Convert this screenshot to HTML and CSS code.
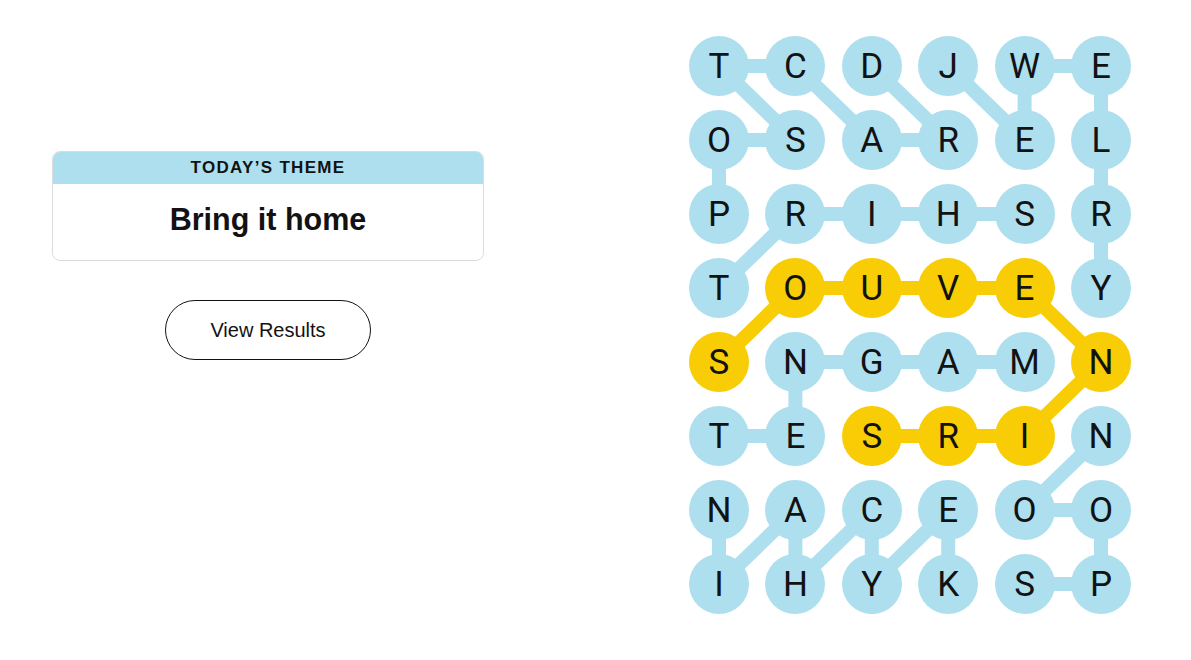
FILE: index.html
```html
<!DOCTYPE html>
<html>
<head>
<meta charset="utf-8">
<link rel="stylesheet" href="styles.css">
</head>
<body>
<div class="page">
  <div class="left">
    <div class="theme-card">
      <div class="theme-head">TODAY’S THEME</div>
      <div class="theme-body">Bring it home</div>
    </div>
    <button class="results-btn">View Results</button>
  </div>
  <div class="board">
    <svg class="links" width="442" height="578" viewBox="0 0 442 578">
      <g class="blue">
        <line x1="30" y1="30" x2="106.4" y2="30"/>
        <line x1="30" y1="30" x2="106.4" y2="104"/>
        <line x1="106.4" y1="30" x2="182.8" y2="104"/>
        <line x1="182.8" y1="30" x2="259.2" y2="104"/>
        <line x1="259.2" y1="30" x2="335.6" y2="104"/>
        <line x1="335.6" y1="30" x2="412" y2="30"/>
        <line x1="335.6" y1="30" x2="335.6" y2="104"/>
        <line x1="412" y1="30" x2="412" y2="104"/>
        <line x1="30" y1="104" x2="106.4" y2="104"/>
        <line x1="182.8" y1="104" x2="259.2" y2="104"/>
        <line x1="30" y1="104" x2="30" y2="178"/>
        <line x1="412" y1="104" x2="412" y2="178"/>
        <line x1="106.4" y1="178" x2="335.6" y2="178"/>
        <line x1="106.4" y1="178" x2="30" y2="252"/>
        <line x1="412" y1="178" x2="412" y2="252"/>
        <line x1="106.4" y1="326" x2="335.6" y2="326"/>
        <line x1="106.4" y1="326" x2="106.4" y2="400"/>
        <line x1="30" y1="400" x2="106.4" y2="400"/>
        <line x1="412" y1="400" x2="335.6" y2="474"/>
        <line x1="335.6" y1="474" x2="412" y2="474"/>
        <line x1="412" y1="474" x2="412" y2="548"/>
        <line x1="335.6" y1="548" x2="412" y2="548"/>
        <line x1="30" y1="474" x2="30" y2="548"/>
        <line x1="30" y1="548" x2="106.4" y2="474"/>
        <line x1="106.4" y1="474" x2="106.4" y2="548"/>
        <line x1="106.4" y1="548" x2="182.8" y2="474"/>
        <line x1="182.8" y1="474" x2="182.8" y2="548"/>
        <line x1="182.8" y1="548" x2="259.2" y2="474"/>
        <line x1="259.2" y1="474" x2="259.2" y2="548"/>
      </g>
      <g class="yellow">
        <line x1="30" y1="326" x2="106.4" y2="252"/>
        <line x1="106.4" y1="252" x2="335.6" y2="252"/>
        <line x1="335.6" y1="252" x2="412" y2="326"/>
        <line x1="412" y1="326" x2="335.6" y2="400"/>
        <line x1="335.6" y1="400" x2="182.8" y2="400"/>
      </g>
    </svg>
    <div class="grid">
      <div class="cell b">T</div><div class="cell b">C</div><div class="cell b">D</div><div class="cell b">J</div><div class="cell b">W</div><div class="cell b">E</div>
      <div class="cell b">O</div><div class="cell b">S</div><div class="cell b">A</div><div class="cell b">R</div><div class="cell b">E</div><div class="cell b">L</div>
      <div class="cell b">P</div><div class="cell b">R</div><div class="cell b">I</div><div class="cell b">H</div><div class="cell b">S</div><div class="cell b">R</div>
      <div class="cell b">T</div><div class="cell y">O</div><div class="cell y">U</div><div class="cell y">V</div><div class="cell y">E</div><div class="cell b">Y</div>
      <div class="cell y">S</div><div class="cell b">N</div><div class="cell b">G</div><div class="cell b">A</div><div class="cell b">M</div><div class="cell y">N</div>
      <div class="cell b">T</div><div class="cell b">E</div><div class="cell y">S</div><div class="cell y">R</div><div class="cell y">I</div><div class="cell b">N</div>
      <div class="cell b">N</div><div class="cell b">A</div><div class="cell b">C</div><div class="cell b">E</div><div class="cell b">O</div><div class="cell b">O</div>
      <div class="cell b">I</div><div class="cell b">H</div><div class="cell b">Y</div><div class="cell b">K</div><div class="cell b">S</div><div class="cell b">P</div>
    </div>
  </div>
</div>
</body>
</html>
```

FILE: styles.css
```css
html, body {
  margin: 0;
  padding: 0;
  background: #fff;
}
body {
  font-family: "Liberation Sans", Arial, sans-serif;
  color: #121212;
  width: 1191px;
  height: 660px;
  overflow: hidden;
}
.page {
  display: flex;
  align-items: flex-start;
  padding: 36px 0 0 52px;
}
.left {
  width: 432px;
  margin-top: 115px;
  display: flex;
  flex-direction: column;
  align-items: center;
}
.theme-card {
  width: 432px;
  box-sizing: border-box;
  border: 1px solid #dcdcdc;
  border-radius: 8px;
  overflow: hidden;
}
.theme-head {
  background: #aedfee;
  height: 32px;
  line-height: 32px;
  text-align: center;
  font-weight: 700;
  font-size: 17px;
  letter-spacing: 1.3px;
}
.theme-body {
  height: 76px;
  line-height: 70px;
  text-align: center;
  font-weight: 700;
  font-size: 30.5px;
}
.results-btn {
  margin-top: 39px;
  width: 206px;
  height: 60px;
  border: 1px solid #121212;
  border-radius: 30px;
  background: #fff;
  font-family: "Liberation Sans", Arial, sans-serif;
  font-size: 20px;
  color: #121212;
  padding: 0;
}
.board {
  position: relative;
  margin-left: 205px;
  width: 442px;
  height: 578px;
}
.links {
  position: absolute;
  left: 0;
  top: 0;
}
.links line {
  stroke-width: 14;
  stroke-linecap: butt;
}
.blue line { stroke: #aedfee; }
.yellow line { stroke: #f8cd05; }
.grid {
  position: relative;
  display: grid;
  grid-template-columns: repeat(6, 60px);
  grid-auto-rows: 60px;
  column-gap: 16.4px;
  row-gap: 14px;
}
.cell {
  width: 60px;
  height: 60px;
  border-radius: 50%;
  display: flex;
  align-items: center;
  justify-content: center;
  font-family: Roboto, "Liberation Sans", sans-serif;
  font-size: 35px;
  font-weight: 400;
  color: #121212;
}
.cell.b { background: #aedfee; }
.cell.y { background: #f8cd05; }
```
